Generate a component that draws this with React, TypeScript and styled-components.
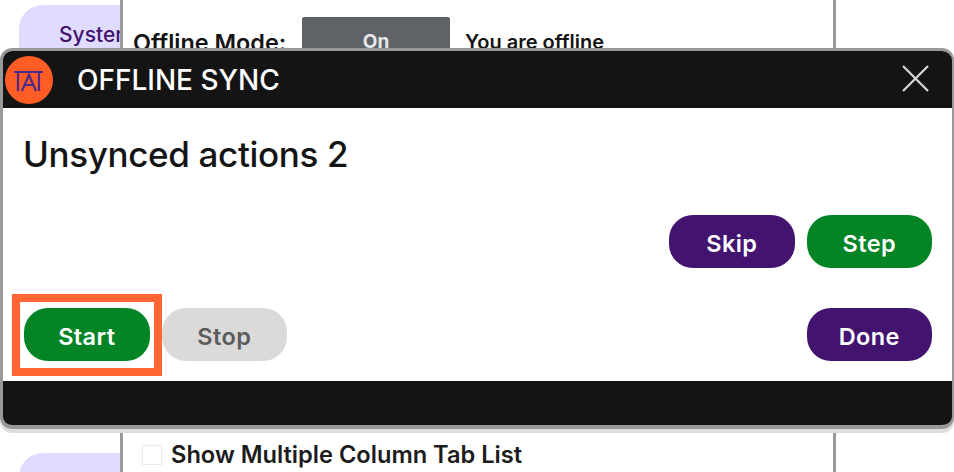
import React from "react";
import styled, { createGlobalStyle } from "styled-components";

const Global = createGlobalStyle`
  html, body { margin: 0; padding: 0; width: 954px; height: 472px; overflow: hidden; background: #fff; }
  body { font-family: Inter, "Liberation Sans", sans-serif; }
`;

const Page = styled.div`
  position: relative;
  width: 954px;
  height: 472px;
  overflow: hidden;
  display: grid;
  grid-template-columns: 120px 716px;
`;

const SideColumn = styled.div`
  padding: 5px 0 0 19px;
  display: flex;
  flex-direction: column;
  gap: 350px;
`;

const SideTab = styled.div`
  height: 98px;
  width: 120px;
  box-sizing: border-box;
  padding: 17px 0 0 40px;
  background: #e0dcff;
  border-radius: 24px 0 0 24px;
  color: #42136f;
  font-size: 21px;
  font-weight: 500;
  line-height: 26px;
  white-space: nowrap;
  overflow: hidden;
`;

const Panel = styled.div`
  position: relative;
  z-index: 1;
  box-sizing: border-box;
  border-left: 3px solid #999;
  border-right: 3px solid #999;
  background: #fff;
  height: 472px;
  padding: 17px 0 0 10px;
  display: flex;
  flex-direction: column;
  gap: 375px;
`;

const ModeRow = styled.div`
  display: flex;
  align-items: flex-start;
`;

const ModeLabel = styled.span`
  width: 169px;
  font-size: 23.4px;
  font-weight: 600;
  line-height: 26px;
  padding-top: 13px;
  color: #141414;
  white-space: nowrap;
`;

const ModeButton = styled.div`
  width: 148px;
  height: 50px;
  box-sizing: border-box;
  padding-top: 12px;
  background: #5f6368;
  border-radius: 2px;
  color: #e8e8e8;
  font-size: 19px;
  font-weight: 700;
  line-height: 26px;
  text-align: center;
`;

const ModeStatus = styled.span`
  margin-left: 15px;
  padding-top: 12px;
  font-size: 20px;
  font-weight: 600;
  line-height: 26px;
  color: #141414;
`;

const OptionRow = styled.label`
  display: flex;
  align-items: center;
  gap: 9px;
  margin-left: 9px;
`;

const OptionBox = styled.span`
  width: 20px;
  height: 20px;
  box-sizing: border-box;
  border: 1px solid #ececec;
  background: #fff;
`;

const OptionText = styled.span`
  font-size: 23.65px;
  font-weight: 600;
  line-height: 26px;
  color: #1c1c1c;
  white-space: nowrap;
`;

const Dialog = styled.div`
  position: absolute;
  z-index: 2;
  left: 0;
  top: 48px;
  width: 954px;
  height: 381px;
  box-sizing: border-box;
  border: 3px solid #999;
  border-right-width: 2px;
  border-bottom-width: 4px;
  border-radius: 12px;
  background: #fff;
  box-shadow: 0 4px 0 #ddd;
  display: flex;
  flex-direction: column;
  overflow: hidden;
`;

const Header = styled.header`
  height: 57px;
  flex: none;
  background: #141414;
  display: flex;
  align-items: center;
  padding-left: 2px;
  color: #fff;
`;

const Logo = styled.svg`
  width: 48px;
  height: 48px;
  flex: none;
`;

const Title = styled.h2`
  margin: 0 0 0 24px;
  flex: 1;
  font-size: 28px;
  font-weight: 500;
  line-height: 32px;
`;

const CloseIcon = styled.svg`
  width: 27px;
  height: 27px;
  margin: 0 23px 3px 0;
  flex: none;
`;

const Body = styled.main`
  flex: 1;
  box-sizing: border-box;
  padding: 23px 20px 20px 21px;
  display: flex;
  flex-direction: column;
`;

const Heading = styled.h1`
  margin: 0 0 0 -1px;
  font-size: 35px;
  font-weight: 500;
  letter-spacing: -0.35px;
  line-height: 46px;
  color: #141414;
  height: 84px;
`;

const ActionRow = styled.div`
  display: flex;
  justify-content: flex-end;
  gap: 12px;
`;

const ControlRow = styled.div`
  margin-top: 40px;
  display: flex;
  gap: 12px;
`;

const Spacer = styled.div`
  flex: 1;
`;

const Pill = styled.button<{ $tone: "green" | "purple" | "grey" }>`
  width: 125.5px;
  height: 53px;
  border: 0;
  border-radius: 24px;
  padding: 3px 0 0;
  font-family: inherit;
  font-size: 23.5px;
  font-weight: 600;
  letter-spacing: 0.4px;
  background: ${(p) => (p.$tone === "green" ? "#038525" : p.$tone === "purple" ? "#42136f" : "#dbdad8")};
  color: ${(p) => (p.$tone === "grey" ? "#5c5c5c" : "#fff")};
`;

const Footer = styled.footer`
  height: 44px;
  flex: none;
  background: #141414;
`;

const Highlight = styled.div`
  position: absolute;
  z-index: 3;
  left: 12px;
  top: 294px;
  width: 150px;
  height: 82px;
  box-sizing: border-box;
  border: 8px solid #ff6633;
`;

export default function App() {
  return (
    <>
      <Global />
      <Page>
        <SideColumn>
          <SideTab>System</SideTab>
          <SideTab />
        </SideColumn>
        <Panel>
          <ModeRow>
            <ModeLabel>Offline Mode:</ModeLabel>
            <ModeButton>On</ModeButton>
            <ModeStatus>You are offline</ModeStatus>
          </ModeRow>
          <OptionRow>
            <OptionBox />
            <OptionText>Show Multiple Column Tab List</OptionText>
          </OptionRow>
        </Panel>
        <Dialog>
          <Header>
            <Logo viewBox="0 0 48 48">
              <circle cx="24" cy="24" r="24" fill="#ff5c26" />
              <path
                d="M9 16H38M13 16V35M34 16V35M17 35L24 19L31 35M19.5 29H28.5"
                fill="none"
                stroke="#4b2a8c"
                strokeWidth="2.2"
              />
            </Logo>
            <Title>OFFLINE SYNC</Title>
            <CloseIcon viewBox="0 0 27 27">
              <path d="M1 1L26 26M26 1L1 26" stroke="#d8d8d8" strokeWidth="2.2" fill="none" />
            </CloseIcon>
          </Header>
          <Body>
            <Heading>Unsynced actions 2</Heading>
            <ActionRow>
              <Pill $tone="purple">Skip</Pill>
              <Pill $tone="green">Step</Pill>
            </ActionRow>
            <ControlRow>
              <Pill $tone="green">Start</Pill>
              <Pill $tone="grey">Stop</Pill>
              <Spacer />
              <Pill $tone="purple">Done</Pill>
            </ControlRow>
          </Body>
          <Footer />
        </Dialog>
        <Highlight />
      </Page>
    </>
  );
}
